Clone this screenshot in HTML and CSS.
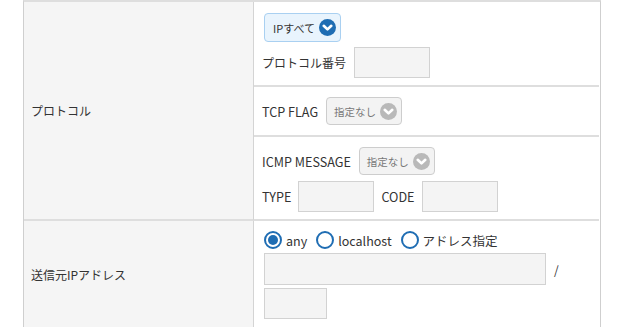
FILE: index.html
```html
<!DOCTYPE html>
<html lang="ja">
<head>
<meta charset="utf-8">
<link rel="stylesheet" href="styles.css">
</head>
<body>
<div class="form">
  <div class="label span3">プロトコル</div>
  <div class="value row1">
    <div class="line">
      <div class="select select-blue">
        <span>IPすべて</span>
        <svg class="chev" viewBox="0 0 18 18" width="17" height="17"><circle cx="9" cy="9" r="9" fill="#1f6db3"/><path d="M5 7.2 L9 11 L13 7.2" fill="none" stroke="#fff" stroke-width="2.8" stroke-linecap="round" stroke-linejoin="round"/></svg>
      </div>
    </div>
    <div class="line">
      <span class="text">プロトコル番号</span>
      <span class="input w76"></span>
    </div>
  </div>
  <div class="value row2">
    <div class="line">
      <span class="text lat">TCP FLAG</span>
      <div class="select select-gray">
        <span>指定なし</span>
        <svg class="chev" viewBox="0 0 18 18" width="17" height="17"><circle cx="9" cy="9" r="9" fill="#b9b9b9"/><path d="M5 7.2 L9 11 L13 7.2" fill="none" stroke="#fff" stroke-width="2.8" stroke-linecap="round" stroke-linejoin="round"/></svg>
      </div>
    </div>
  </div>
  <div class="value row3">
    <div class="line">
      <span class="text lat">ICMP MESSAGE</span>
      <div class="select select-gray">
        <span>指定なし</span>
        <svg class="chev" viewBox="0 0 18 18" width="17" height="17"><circle cx="9" cy="9" r="9" fill="#b9b9b9"/><path d="M5 7.2 L9 11 L13 7.2" fill="none" stroke="#fff" stroke-width="2.8" stroke-linecap="round" stroke-linejoin="round"/></svg>
      </div>
    </div>
    <div class="line">
      <span class="text lat type">TYPE</span>
      <span class="input w76"></span>
      <span class="text lat code">CODE</span>
      <span class="input w76"></span>
    </div>
  </div>

  <div class="label">送信元IPアドレス</div>
  <div class="value row4">
    <div class="radios">
      <label class="radio"><span class="dot checked"></span>any</label>
      <label class="radio"><span class="dot"></span>localhost</label>
      <label class="radio"><span class="dot"></span>アドレス指定</label>
    </div>
    <div class="line addr">
      <span class="input wide"></span>
      <span class="slash">/</span>
    </div>
    <span class="input small"></span>
  </div>
</div>
</body>
</html>
```

FILE: styles.css
```css
html, body {
  margin: 0;
  padding: 0;
  background: #fff;
}

body {
  font-family: "Noto Sans CJK JP", "Noto Sans", sans-serif;
  font-size: 12px;
  color: #333;
  width: 621px;
  height: 327px;
  overflow: hidden;
}

.form {
  display: grid;
  grid-template-columns: 230px 345px;
  margin-left: 23px;
  width: 576px;
  border-left: 1px solid #cfcfcf;
  border-right: 1px solid #cfcfcf;
  border-top: 2px solid #dedede;
}

.label {
  background: #f5f5f5;
  border-right: 1px solid #d4d4d4;
  border-bottom: 2px solid #dedede;
  display: flex;
  align-items: center;
  padding-left: 7px;
}

.span3 {
  grid-row: span 3;
}

.value {
  border-bottom: 2px solid #dedede;
  padding-left: 8px;
  display: flex;
  flex-direction: column;
}

.row1 { padding-top: 11px; padding-bottom: 6px; gap: 5px; height: 66px; }
.row2 { padding-top: 10px; padding-bottom: 10px; }
.row3 { padding-top: 10px; padding-bottom: 7px; gap: 6px; }
.row4 { padding-top: 10px; padding-bottom: 8px; gap: 3px; }

.line {
  display: flex;
  align-items: center;
}

.text {
  margin-right: 8px;
  white-space: nowrap;
}

.lat {
  font-size: 12.6px;
}

.type {
  margin-right: 7px;
}

.code {
  margin-left: 7px;
  margin-right: 7px;
}

.select {
  display: inline-flex;
  align-items: center;
  justify-content: space-between;
  height: 28px;
  box-sizing: border-box;
  border-radius: 4px;
  padding: 0 4px 0 8px;
  white-space: nowrap;
}

.row1 .select {
  margin-left: 2px;
}

.select-blue {
  width: 77px;
  height: 29px;
  background: #e9f4fd;
  border: 1px solid #a9d0f1;
  color: #333;
  font-size: 11px;
}

.select-gray {
  width: 76px;
  background: #f3f3f3;
  border: 1px solid #cdcdcd;
  color: #777;
  font-size: 10.5px;
  padding-left: 7px;
}

.chev {
  flex: none;
}

.input {
  display: inline-block;
  box-sizing: border-box;
  background: #f4f4f4;
  border: 1px solid #d2d2d2;
  height: 31px;
}

.w76 { width: 76px; }

.radios {
  display: flex;
  align-items: center;
  height: 18px;
  margin-left: 2px;
  gap: 9px;
}

.radio {
  display: inline-flex;
  align-items: center;
  gap: 4px;
  font-size: 12.5px;
  white-space: nowrap;
}

.dot {
  width: 18px;
  height: 18px;
  box-sizing: border-box;
  border-radius: 50%;
  border: 2px solid #1f6db3;
  background: #fff;
  position: relative;
}

.dot.checked::after {
  content: "";
  position: absolute;
  left: 2px;
  top: 2px;
  width: 10px;
  height: 10px;
  border-radius: 50%;
  background: #1f6db3;
}

.addr {
  margin-top: 1px;
}

.wide {
  width: 282px;
  height: 32px;
  margin-left: 2px;
}

.slash {
  margin-left: 8px;
}

.small {
  width: 63px;
  height: 31px;
  margin-left: 2px;
}
```
